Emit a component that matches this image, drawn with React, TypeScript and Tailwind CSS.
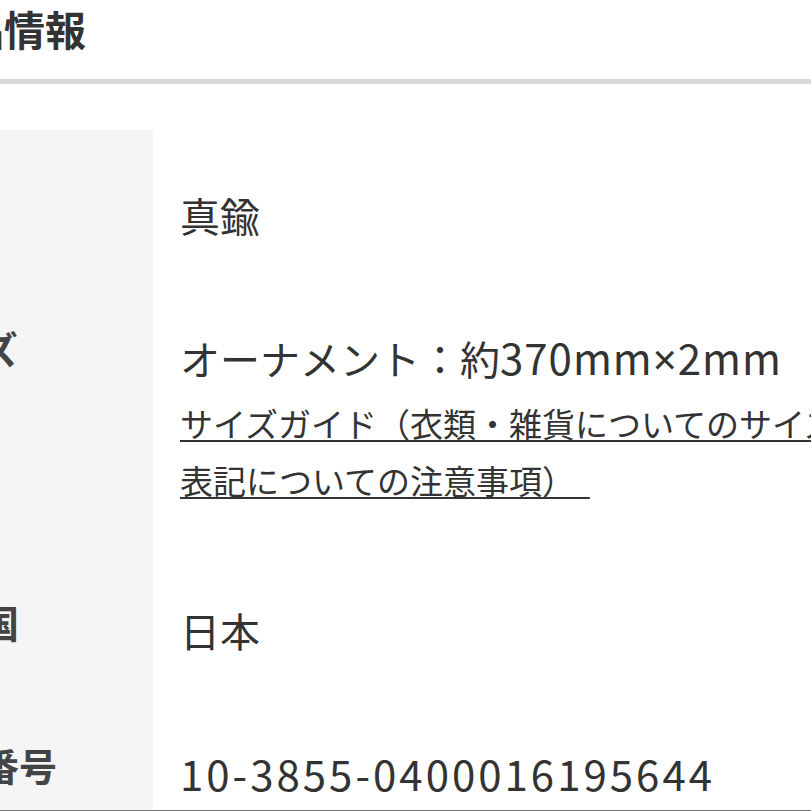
import React from 'react';

const App: React.FC = () => {
  return (
    <div
      className="w-[811px] h-[811px] overflow-hidden bg-white text-[#333]"
      style={{ fontFamily: '"Noto Sans CJK JP", "Noto Sans", sans-serif' }}
    >
      {/* section header */}
      <div className="h-[79px] flex items-center pb-[22px]">
        <h2 className="ml-[-78px] text-[41px] font-bold leading-none whitespace-nowrap text-[#333]">商品情報</h2>
      </div>
      <div className="h-[5px] bg-[#d9d9d9]" />
      <div className="h-[46px]" />

      <div className="grid grid-cols-[153px_1fr] border-b-2 border-[#777]">
        {/* 素材 */}
        <div className="bg-[#f5f5f5] relative">
          <span className="absolute left-[-95px] top-[72px] text-[38px] font-semibold text-[#444] whitespace-nowrap leading-none">素材</span>
        </div>
        <div className="pl-[27px] pt-[57px] pb-[43px] text-[40px] leading-[56px] whitespace-nowrap">真鍮</div>

        {/* サイズ */}
        <div className="bg-[#f5f5f5] relative">
          <span className="absolute left-[-95px] top-[43px] text-[38px] font-semibold text-[#444] whitespace-nowrap leading-none">サイズ</span>
        </div>
        <div className="pl-[27px] pt-[43px] pb-[50px] whitespace-nowrap">
          <div className="text-[40px] leading-[56px]">
            オーナメント：約<span className="text-[42px] tracking-[1px]">370mm<span style={{ fontFamily: '"Noto Sans", sans-serif' }}>×</span>2mm</span>
          </div>
          <a className="block mt-2 text-[33px] leading-[57px] underline decoration-[2px] decoration-[#333] underline-offset-[3px] text-[#333]">
            サイズガイド（衣類・雑貨についてのサイズ
            <br />
            表記についての注意事項）{'\u00a0\u00a0'}
          </a>
        </div>

        {/* 原産国 */}
        <div className="bg-[#f5f5f5] relative">
          <span className="absolute left-[-95px] top-[44px] text-[38px] font-semibold text-[#444] whitespace-nowrap leading-none">原産国</span>
        </div>
        <div className="pl-[27px] pt-[43px] pb-[46px] text-[40px] leading-[56px] whitespace-nowrap">日本</div>

        {/* 商品番号 */}
        <div className="bg-[#f5f5f5] relative">
          <span className="absolute left-[-95px] top-[42px] text-[38px] font-semibold text-[#444] whitespace-nowrap leading-none">商品番号</span>
        </div>
        <div className="pl-[27px] pt-[41px] pb-[9px] text-[42px] tracking-[3px] leading-[56px] whitespace-nowrap">10-3855-0400016195644</div>
      </div>
    </div>
  );
};

export default App;
